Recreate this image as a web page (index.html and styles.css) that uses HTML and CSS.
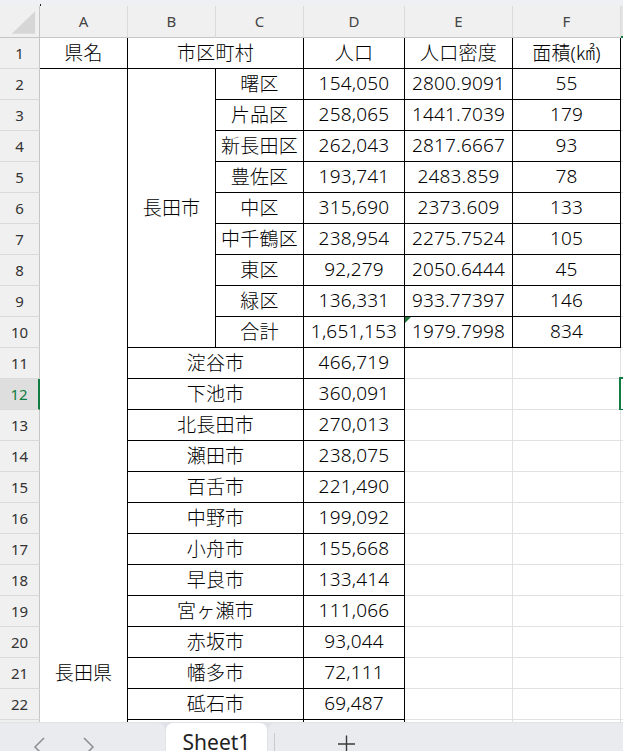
FILE: index.html
```html
<!DOCTYPE html>
<html lang="ja">
<head>
<meta charset="utf-8">
<title>Sheet1</title>
<link rel="stylesheet" href="styles.css">
</head>
<body>
<div class="app">
  <div class="topbar"></div>
  <div class="sheet">
    <div class="grid">
      <div class="corner"><svg width="40" height="32" viewBox="0 0 40 32"><polygon points="36,5 36,28 12,28" fill="#d6d6d6"/></svg></div>
      <div class="hd">A</div><div class="hd">B</div><div class="hd">C</div><div class="hd">D</div><div class="hd">E</div><div class="hd">F</div><div class="hd hd-sel">G</div>

      <div class="rh">1</div>
      <div class="c k">県名</div>
      <div class="c k span2">市区町村</div>
      <div class="c k">人口</div>
      <div class="c k">人口密度</div>
      <div class="c k">面積(㎢)</div>
      <div class="c"></div>

      <div class="rh">2</div>
      <div class="c kr pref">長田県</div>
      <div class="c k city">長田市</div>
      <div class="c k">曙区</div><div class="c k">154,050</div><div class="c k">2800.9091</div><div class="c k">55</div><div class="c"></div>

      <div class="rh">3</div>
      <div class="c k">片品区</div><div class="c k">258,065</div><div class="c k">1441.7039</div><div class="c k">179</div><div class="c"></div>
      <div class="rh">4</div>
      <div class="c k">新長田区</div><div class="c k">262,043</div><div class="c k">2817.6667</div><div class="c k">93</div><div class="c"></div>
      <div class="rh">5</div>
      <div class="c k">豊佐区</div><div class="c k">193,741</div><div class="c k">2483.859</div><div class="c k">78</div><div class="c"></div>
      <div class="rh">6</div>
      <div class="c k">中区</div><div class="c k">315,690</div><div class="c k">2373.609</div><div class="c k">133</div><div class="c"></div>
      <div class="rh">7</div>
      <div class="c k">中千鶴区</div><div class="c k">238,954</div><div class="c k">2275.7524</div><div class="c k">105</div><div class="c"></div>
      <div class="rh">8</div>
      <div class="c k">東区</div><div class="c k">92,279</div><div class="c k">2050.6444</div><div class="c k">45</div><div class="c"></div>
      <div class="rh">9</div>
      <div class="c k">緑区</div><div class="c k">136,331</div><div class="c k">933.77397</div><div class="c k">146</div><div class="c"></div>
      <div class="rh">10</div>
      <div class="c k">合計</div><div class="c k">1,651,153</div><div class="c k flag">1979.7998</div><div class="c k">834</div><div class="c"></div>

      <div class="rh">11</div>
      <div class="c k span2">淀谷市</div><div class="c k">466,719</div><div class="c"></div><div class="c"></div><div class="c"></div>
      <div class="rh rh-sel">12</div>
      <div class="c k span2">下池市</div><div class="c k">360,091</div><div class="c"></div><div class="c"></div><div class="c active"></div>
      <div class="rh">13</div>
      <div class="c k span2">北長田市</div><div class="c k">270,013</div><div class="c"></div><div class="c"></div><div class="c"></div>
      <div class="rh">14</div>
      <div class="c k span2">瀬田市</div><div class="c k">238,075</div><div class="c"></div><div class="c"></div><div class="c"></div>
      <div class="rh">15</div>
      <div class="c k span2">百舌市</div><div class="c k">221,490</div><div class="c"></div><div class="c"></div><div class="c"></div>
      <div class="rh">16</div>
      <div class="c k span2">中野市</div><div class="c k">199,092</div><div class="c"></div><div class="c"></div><div class="c"></div>
      <div class="rh">17</div>
      <div class="c k span2">小舟市</div><div class="c k">155,668</div><div class="c"></div><div class="c"></div><div class="c"></div>
      <div class="rh">18</div>
      <div class="c k span2">早良市</div><div class="c k">133,414</div><div class="c"></div><div class="c"></div><div class="c"></div>
      <div class="rh">19</div>
      <div class="c k span2">宮ヶ瀬市</div><div class="c k">111,066</div><div class="c"></div><div class="c"></div><div class="c"></div>
      <div class="rh">20</div>
      <div class="c k span2">赤坂市</div><div class="c k">93,044</div><div class="c"></div><div class="c"></div><div class="c"></div>
      <div class="rh">21</div>
      <div class="c k span2">幡多市</div><div class="c k">72,111</div><div class="c"></div><div class="c"></div><div class="c"></div>
      <div class="rh">22</div>
      <div class="c k span2">砥石市</div><div class="c k">69,487</div><div class="c"></div><div class="c"></div><div class="c"></div>
      <div class="rh">23</div>
      <div class="c k span2"></div><div class="c k"></div><div class="c"></div><div class="c"></div><div class="c"></div>
    </div>
  </div>
  <div class="tabbar">
    <div class="nav">
      <svg width="165" height="28" viewBox="0 0 165 28">
        <polyline points="44,15 35,24 44,33" fill="none" stroke="#8e8e8e" stroke-width="1.5"/>
        <polyline points="84,15 93,24 84,33" fill="none" stroke="#8e8e8e" stroke-width="1.5"/>
      </svg>
    </div>
    <div class="tab">Sheet1</div>
    <div class="rest">
      <svg width="120" height="28" viewBox="0 0 120 28">
        <line x1="6.5" y1="10" x2="6.5" y2="28" stroke="#c9cbd0" stroke-width="1"/>
        <line x1="70" y1="21" x2="87" y2="21" stroke="#3a3a3a" stroke-width="1.4"/>
        <line x1="78.5" y1="12.5" x2="78.5" y2="30" stroke="#3a3a3a" stroke-width="1.4"/>
      </svg>
    </div>
  </div>
</div>
</body>
</html>
```
FILE: styles.css
```css
* { box-sizing: border-box; }

body {
  margin: 0;
  width: 623px;
  height: 751px;
  overflow: hidden;
  background: #fff;
  font-family: "Noto Sans CJK JP", "Noto Sans", sans-serif;
  color: #111;
}

.app {
  display: flex;
  flex-direction: column;
  height: 751px;
}

.topbar {
  flex: none;
  height: 6px;
  background: #eef0f3;
  position: relative;
}

.topbar::after {
  content: "";
  position: absolute;
  left: 40px;
  top: 4px;
  width: 1px;
  height: 2px;
  background: #222;
}

.sheet {
  flex: 1;
  overflow: hidden;
}

.grid {
  display: grid;
  grid-template-columns: 40px 88px 88px 88px 101px 108px 108px 100px;
  grid-template-rows: 32px;
  grid-auto-rows: 31px;
}

.corner {
  background: #f0f0f0;
  border-right: 1px solid #c6c6c6;
  border-bottom: 1px solid #c6c6c6;
  display: flex;
}

.hd {
  background: #f0f0f0;
  border-right: 1px solid #dadada;
  border-bottom: 1px solid #c6c6c6;
  display: flex;
  align-items: center;
  justify-content: center;
  font-family: "Noto Sans", sans-serif;
  font-size: 15px;
  color: #444;
  padding-bottom: 2px;
}

.hd-sel {
  background: #e4e4e4;
  border-bottom: 2px solid #107c41;
}

.rh {
  background: #f0f0f0;
  border-right: 1px solid #c6c6c6;
  border-bottom: 1px solid #dadada;
  display: flex;
  align-items: center;
  justify-content: center;
  font-family: "Noto Sans", sans-serif;
  font-size: 15px;
  color: #333;
  padding-bottom: 1px;
}

.rh-sel {
  background: #dedede;
  color: #107c41;
  border-right: 2px solid #107c41;
}

.c {
  background: #fff;
  border-right: 1px solid #e1e1e1;
  border-bottom: 1px solid #e1e1e1;
  display: flex;
  align-items: center;
  justify-content: center;
  white-space: nowrap;
  font-family: "Noto Sans", "Noto Sans CJK JP", sans-serif;
  font-weight: 300;
  font-size: 19px;
  letter-spacing: 0.2px;
  color: #000;
  padding-bottom: 3px;
  position: relative;
}

.k {
  border-right-color: #000;
  border-bottom-color: #000;
}

.kr {
  border-right-color: #000;
}

.span2 {
  grid-column: span 2;
}

.pref {
  grid-row: span 39;
}

.city {
  grid-row: span 9;
}

.flag::before {
  content: "";
  position: absolute;
  left: 0;
  top: 0;
  border-top: 6px solid #1f7a3a;
  border-right: 6px solid transparent;
}

.active::after {
  content: "";
  position: absolute;
  left: -2px;
  top: -2px;
  right: -4px;
  bottom: -2px;
  border: 2px solid #107c41;
}

.tabbar {
  flex: none;
  height: 29px;
  padding-top: 1px;
  background: #e0e2e7;
  display: flex;
  gap: 1px;
  overflow: hidden;
}

.nav {
  width: 165px;
  background: #e9ebef;
  border-top-right-radius: 7px;
  overflow: hidden;
}

.tab {
  width: 101px;
  background: #fff;
  border-radius: 7px 7px 0 0;
  text-align: center;
  font-family: "Noto Sans", sans-serif;
  font-size: 21px;
  line-height: 28px;
  padding-top: 5px;
  color: #222;
  overflow: hidden;
}

.rest {
  flex: 1;
  background: #e9ebef;
  border-top-left-radius: 7px;
  overflow: hidden;
}
```
